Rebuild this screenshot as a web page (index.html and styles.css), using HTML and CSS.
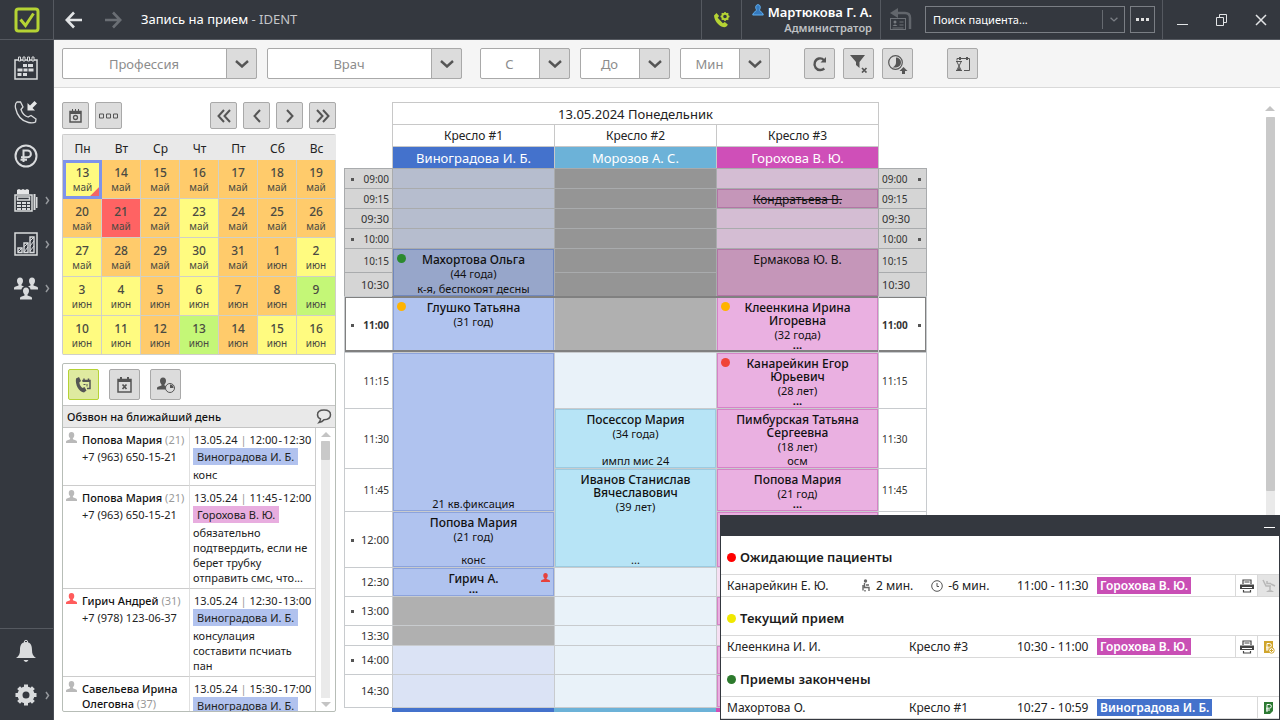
FILE: index.html
```html
<!DOCTYPE html>
<html lang="ru">
<head>
<meta charset="utf-8">
<meta name="viewport" content="width=device-width, initial-scale=1">
<title>Запись на прием - IDENT</title>
<link rel="stylesheet" href="styles.css">
</head>
<body>
<svg class="defs" aria-hidden="true">
  <symbol id="person" viewBox="0 0 12 12"><path d="M6 0c2 0 3 1.300 3 3.200C9 5 8.200 6.300 7.500 6.900v1L11 9.200c.6.300 1 .8 1 1.500V12H0v-1.300c0-.7.400-1.200 1-1.500l3.500-1.300v-1C3.800 6.300 3 5 3 3.200 3 1.300 4 0 6 0z" fill="currentColor"/></symbol>
  <symbol id="chev" viewBox="0 0 14 8"><path d="M1 1l6 5.500L13 1" fill="none" stroke="currentColor" stroke-width="2.400"/></symbol>
  <symbol id="more" viewBox="0 0 5 9"><path d="M1 1l2.500 3.500L1 8" fill="none" stroke="currentColor" stroke-width="1.500"/></symbol>
  <symbol id="printer" viewBox="0 0 14 14"><path d="M3 5V1h8v4M4.500 3h5M3.500 11v2h7v-2" fill="none" stroke="#444" stroke-width="1.200"/><path d="M0 5.500h14V10H0z" fill="#444"/><path d="M2 8.500h10" stroke="#fff"/></symbol>
</svg>
<div class="app">
  <header class="topbar">
    <a class="logo" href="#" aria-label="IDENT"><svg width="26" height="26" viewBox="0 0 26 26"><rect x="2" y="2" width="22" height="22" rx="2.500" fill="none" stroke="#b5d334" stroke-width="3"/><path d="M6.500 12.500l5 6L19.500 6.500" fill="none" stroke="#b5d334" stroke-width="3"/></svg></a>
    <button class="nav-arrow" aria-label="Назад"><svg width="18" height="18" viewBox="0 0 18 18"><path d="M17 9H2M9 1.500L1.800 9 9 16.500" fill="none" stroke="#e2e4e6" stroke-width="2.600"/></svg></button>
    <button class="nav-arrow" aria-label="Вперед"><svg width="18" height="18" viewBox="0 0 18 18"><path d="M1 9h15M9 1.500L16.200 9 9 16.500" fill="none" stroke="#6a6e74" stroke-width="2.600"/></svg></button>
    <h1 class="title">Запись на прием <span>- IDENT</span></h1>
    <button class="phone-set" aria-label="Телефония"><svg width="18" height="18" viewBox="0 0 18 18"><path d="M1 4.500L3.500 2l2.600 3-1.400 1.800 5.200 5.400 1.900-1.300 3 2.600c-1 2.500-3 3.300-5.800 2.200C5 14 1.500 10 1 4.500z" fill="#b5d334"/><circle cx="12" cy="5.500" r="2.800" fill="none" stroke="#b5d334" stroke-width="2"/><path d="M12 1v1.500M12 8.500V10M7.500 5.500H9M15 5.500h1.500M8.800 2.300l1 1M14.200 7.700l1 1M8.800 8.700l1-1M14.200 3.300l1-1" stroke="#b5d334" stroke-width="1.500"/></svg></button>
    <div class="user"><div class="user-name"><svg width="12" height="12" viewBox="0 0 12 12"><path d="M6 .7C9 .7 8.600 5 7.200 6L10.500 9l.8 2H.7l.8-2L4.800 6C3.400 5 3 .7 6 .7z" fill="#3579bd" stroke="#5fb0f2"/></svg>Мартюкова Г. А.</div><div class="user-role">Администратор</div></div>
    <button class="card-back" aria-label="Вернуться к карте"><svg width="22" height="23" viewBox="0 0 22 23"><path d="M7 5h8q5 0 5 5v11" fill="none" stroke="#62666c" stroke-width="2.500"/><path d="M0 5l8-5v10z" fill="#62666c"/><rect x=".5" y="10.500" width="15" height="11" fill="#34383f" stroke="#6d7177"/><path d="M9.500 14h4M9.500 17h4M2.500 20h11" stroke="#6d7177"/><circle cx="5" cy="14" r="1.500" fill="#777b80"/><path d="M2.500 18q2.500-3 5 0z" fill="#777b80"/></svg></button>
    <div class="search"><input type="text" aria-label="Поиск пациента" placeholder="Поиск пациента..."><button aria-label="Показать список"><svg width="8" height="5"><use href="#chev"/></svg></button></div>
    <button class="dots" aria-label="Ещё"><svg width="13" height="3" viewBox="0 0 13 3"><path d="M0 0h3v3H0zM5 0h3v3H5zM10 0h3v3h-3z" fill="#e0e0e0"/></svg></button>
    <div class="win">
      <button aria-label="Свернуть"><svg width="12" height="12" viewBox="0 0 12 12"><path d="M0 10.500h11" stroke="#e2e4e6"/></svg></button>
      <button aria-label="Восстановить"><svg width="12" height="12" viewBox="0 0 12 12"><path d="M.5 3.500h7v8h-7zM3.500 3V.5h7v8H8" fill="none" stroke="#e2e4e6"/></svg></button>
      <button aria-label="Закрыть"><svg width="12" height="12" viewBox="0 0 12 12"><path d="M1 1l10 10M11 1L1 11" stroke="#e2e4e6" stroke-width="1.500"/></svg></button>
    </div>
  </header>

  <nav class="sidebar">
    <div class="side-group">
      <a href="#" aria-label="Расписание"><svg width="24" height="24" viewBox="0 0 24 24"><path d="M1 4h22v19H1z" fill="none" stroke="#d9dbdd" stroke-width="1.500"/><path d="M4.500 1h2v4h-2zM9 1h2v4H9zM13.500 1h2v4h-2zM18 1h2v4h-2z" fill="#34383f" stroke="#d9dbdd"/><path d="M9 8h4v3H9zM14 8h5v3h-5zM3.500 12.500h5v3h-5zM9.500 12.500h4v3h-4zM14.500 12.500h5v3h-5zM3.500 17h4v3h-4zM9 17h4v3H9z" fill="#d9dbdd"/></svg></a>
      <a href="#" aria-label="Звонки"><svg width="24" height="24" viewBox="0 0 24 24"><path d="M3 2C1.500 3 1 5 1.500 8c1.500 7 6 13 13 14.500 3 .7 5.500.5 7-.5l.5-3-5-3.500-3 1.500C10.500 16 8 12.500 7 9.500l2-2.500L6.500 2z" fill="none" stroke="#d9dbdd" stroke-width="1.300"/><path d="M13.500 3v7.500h7.500l-2.500-2.500L23 3.500 20.500 1 16 5.500z" fill="#e5e6e7"/></svg></a>
      <a href="#" aria-label="Касса"><svg width="24" height="24" viewBox="0 0 24 24"><circle cx="12" cy="12" r="10.500" fill="none" stroke="#d9dbdd" stroke-width="2"/><path d="M9.500 18V6.500h4a3.300 3.300 0 010 6.800H7M6.500 15.800H13" fill="none" stroke="#d9dbdd" stroke-width="2"/></svg></a>
      <a href="#" aria-label="Оплата"><svg width="24" height="24" viewBox="0 0 24 24"><path d="M3 6V2l2-1 2 1 2-1 2 1 2-1 2 1v4z" fill="#e5e6e7"/><path d="M1 7h17v16H1zM3.500 9h12v3h-12z" fill="none" stroke="#d9dbdd" stroke-width="1.500"/><path d="M3 14h4v2H3zM8 14h4v2H8zM13 14h3v2h-3zM3 17h4v2H3zM8 17h4v2H8zM13 17h3v2h-3zM3 20h4v2H3zM8 20h4v2H8zM13 20h3v2h-3z" fill="#d9dbdd"/><path d="M19.500 6h2v16h-2zM22 9h1.500v11H22z" fill="#d9dbdd"/></svg><svg class="more" width="5" height="9"><use href="#more"/></svg></a>
      <a href="#" aria-label="Отчеты"><svg width="24" height="24" viewBox="0 0 24 24"><path d="M1 1h22v22H1z" fill="none" stroke="#d9dbdd" stroke-width="1.500"/><path d="M4 16h4v4.500H4zM10 11h4v9.500h-4zM16 5h4v15.500h-4z" fill="none" stroke="#d9dbdd" stroke-width="1.400"/><path d="M4 20l4-4M10 15l4-4M10 20l4-5M16 9l4-4M16 14l4-5M16 19l4-5" fill="none" stroke="#d9dbdd"/></svg><svg class="more" width="5" height="9"><use href="#more"/></svg></a>
      <a href="#" aria-label="Пациенты"><svg width="24" height="24" viewBox="0 0 24 24" color="#d9dbdd"><use href="#person" width="12" height="13" y="1"/><use href="#person" x="12" width="12" height="13" y="1"/><circle cx="12" cy="14.500" r="4.700" fill="#34383f"/><use href="#person" x="6" y="11" width="12" height="13"/></svg><svg class="more" width="5" height="9"><use href="#more"/></svg></a>
    </div>
    <div class="side-group bottom">
      <a href="#" aria-label="Уведомления"><svg width="24" height="24" viewBox="0 0 24 24"><path d="M12 3c-5 0-6 4-6 8 0 4-1 6-4 8h20c-3-2-4-4-4-8 0-4-1-8-6-8z" fill="#d9dbdd"/><circle cx="12" cy="3" r="1.700" fill="none" stroke="#d9dbdd"/><path d="M9.500 21h5q-2.500 4-5 0z" fill="#d9dbdd"/></svg></a>
      <a href="#" aria-label="Настройки"><svg width="24" height="24" viewBox="0 0 24 24"><circle cx="12" cy="12" r="6" fill="none" stroke="#d9dbdd" stroke-width="5"/><path d="M12 1.500v4M12 18.500v4M1.500 12h4M18.500 12h4M4.600 4.600l3 3M16.400 16.400l3 3M4.600 19.400l3-3M16.400 7.600l3-3" stroke="#d9dbdd" stroke-width="4"/></svg><svg class="more" width="5" height="9"><use href="#more"/></svg></a>
    </div>
  </nav>

  <div class="toolbar">
    <div class="combo wide"><select aria-label="Профессия"><option>Профессия</option></select><span><svg width="14" height="8"><use href="#chev"/></svg></span></div>
    <div class="combo wide"><select aria-label="Врач"><option>Врач</option></select><span><svg width="14" height="8"><use href="#chev"/></svg></span></div>
    <div class="times">
      <div class="combo"><select aria-label="С"><option>С</option></select><span><svg width="14" height="8"><use href="#chev"/></svg></span></div>
      <div class="combo"><select aria-label="До"><option>До</option></select><span><svg width="14" height="8"><use href="#chev"/></svg></span></div>
      <div class="combo"><select aria-label="Минут"><option>Мин</option></select><span><svg width="14" height="8"><use href="#chev"/></svg></span></div>
    </div>
    <div class="tools">
      <button class="btn tall" aria-label="Обновить"><svg width="16" height="16" viewBox="0 0 16 16"><path d="M12 4.200A5.500 5.800 0 108.500 14q2 0 3.800-1.500" fill="none" stroke="#555" stroke-width="2.400"/><path d="M14 1v5.500H8.500z" fill="#555"/></svg></button>
      <button class="btn tall" aria-label="Сбросить фильтр"><svg width="19" height="19" viewBox="0 0 19 19"><path d="M1 1h15l-5.500 7v6L7 11V8z" fill="#555"/><path d="M13 14l4.500 4.500M17.500 14L13 18.500" stroke="#555" stroke-width="1.700"/></svg></button>
      <button class="btn tall" aria-label="Добавить время"><svg width="21" height="20" viewBox="0 0 21 20"><circle cx="8.500" cy="8.500" r="6.800" fill="none" stroke="#555" stroke-width="1.200"/><path d="M9 3.500a5 5 0 010 10H5.500Q9 11.500 9 8.500z" fill="#555"/><path d="M16.500 13l4 4H18v3h-3v-3h-2.500z" fill="#555"/></svg></button>
      <button class="btn tall apart" aria-label="Лист ожидания"><svg width="16" height="16" viewBox="0 0 16 16"><path d="M2 4.500V2.500h12.500V14.500H9" fill="none" stroke="#555"/><path d="M4 1h2v3H4zM11 1h2v3h-2z" fill="#555"/><path d="M1 5.500h6M1 14.500h6M2 6l4 8M6 6L2 14" fill="none" stroke="#555"/><path d="M2.500 14L4 11l1.500 3z" fill="#555"/></svg></button>
    </div>
  </div>

  <main class="content">
    <aside class="left">
      <div class="cal-nav">
        <button class="btn" aria-label="Сегодня"><svg width="13" height="14" viewBox="0 0 13 14"><path d="M1 2.500h11V13H1z" fill="none" stroke="#555" stroke-width="1.500"/><path d="M1 3h11v2H1zM3 0h1v3H3zM6 0h1v3H6zM9 0h1v3H9z" fill="#555"/><circle cx="6.500" cy="8.500" r="2" fill="none" stroke="#555" stroke-width="1.300"/></svg></button>
        <button class="btn" aria-label="Другие даты"><svg width="19" height="6" viewBox="0 0 19 6"><path d="M.500 1h4v4h-4zM7.500 1h4v4h-4zM14.500 1h4v4h-4z" fill="none" stroke="#555"/></svg></button>
        <button class="btn push" aria-label="Назад на месяц"><svg width="14" height="14" viewBox="0 0 14 14"><path d="M7 1L1.500 7 7 13M13 1L7.500 7l5.500 6" fill="none" stroke="#555" stroke-width="2"/></svg></button>
        <button class="btn" aria-label="Назад на неделю"><svg width="8" height="14" viewBox="0 0 8 14"><path d="M7 1L1.500 7 7 13" fill="none" stroke="#555" stroke-width="2"/></svg></button>
        <button class="btn" aria-label="Вперед на неделю"><svg width="8" height="14" viewBox="0 0 8 14"><path d="M1 1l5.500 6L1 13" fill="none" stroke="#555" stroke-width="2"/></svg></button>
        <button class="btn" aria-label="Вперед на месяц"><svg width="14" height="14" viewBox="0 0 14 14"><path d="M1 1l5.500 6L1 13M7 1l5.500 6L7 13" fill="none" stroke="#555" stroke-width="2"/></svg></button>
      </div>
      <table class="month">
        <thead><tr><th>Пн</th><th>Вт</th><th>Ср</th><th>Чт</th><th>Пт</th><th>Сб</th><th>Вс</th></tr></thead>
        <tbody>
          <tr><td class="y today">13<small>май</small></td><td>14<small>май</small></td><td>15<small>май</small></td><td>16<small>май</small></td><td>17<small>май</small></td><td>18<small>май</small></td><td>19<small>май</small></td></tr>
          <tr><td>20<small>май</small></td><td class="r">21<small>май</small></td><td>22<small>май</small></td><td class="y">23<small>май</small></td><td>24<small>май</small></td><td>25<small>май</small></td><td>26<small>май</small></td></tr>
          <tr><td class="y">27<small>май</small></td><td>28<small>май</small></td><td>29<small>май</small></td><td class="y">30<small>май</small></td><td>31<small>май</small></td><td>1<small>июн</small></td><td class="y">2<small>июн</small></td></tr>
          <tr><td class="y">3<small>июн</small></td><td class="y">4<small>июн</small></td><td>5<small>июн</small></td><td class="y">6<small>июн</small></td><td>7<small>июн</small></td><td>8<small>июн</small></td><td class="g">9<small>июн</small></td></tr>
          <tr><td class="y">10<small>июн</small></td><td class="y">11<small>июн</small></td><td>12<small>июн</small></td><td class="g">13<small>июн</small></td><td>14<small>июн</small></td><td class="y">15<small>июн</small></td><td class="y">16<small>июн</small></td></tr>
        </tbody>
      </table>
      <section class="calls">
        <div class="tabs">
          <button class="btn tab on" aria-label="Обзвон"><svg width="17" height="17" viewBox="0 0 17 17"><path d="M1 2.500L4 1l2 4-1.700 1.500C4.500 9 6 11 7.500 12L9.500 11l2 3.500-2.500 2C4 16 0 9 1 2.500z" fill="#555"/><path d="M7.500 4.500h7.500v8h-3M9 5V2.500M13.500 5V2.500" fill="none" stroke="#555" stroke-width="1.500"/><path d="M7.500 5h7.500" stroke="#555" stroke-width="2"/><path d="M8.500 8.500h2M12 8v2.500" stroke="#555"/></svg></button>
          <button class="btn tab" aria-label="Отмены"><svg width="15" height="16" viewBox="0 0 15 16"><path d="M1 2.500h13V15H1z" fill="none" stroke="#555" stroke-width="1.500"/><path d="M1 2h13v3H1zM3 0h2v3H3zM10 0h2v3h-2z" fill="#555"/><path d="M5.500 7.500l4 4.500M9.500 7.500l-4 4.500" stroke="#555" stroke-width="1.700"/></svg></button>
          <button class="btn tab" aria-label="Ожидание"><svg width="18" height="17" viewBox="0 0 18 17" color="#555"><use href="#person" y="1" width="12" height="13"/><circle cx="13" cy="12" r="4.500" fill="#dcdcdc" stroke="#555"/><path d="M13 12V8.500A3.500 3.500 0 0116.500 12z" fill="#555"/></svg></button>
        </div>
        <div class="calls-head"><h2>Обзвон на ближайший день</h2><svg width="16" height="15" viewBox="0 0 15 15"><path d="M7.500 1C3.500 1 1 3 1 5.800c0 2 1 3.400 3 4.200-.2 1.500-.700 2.500-1.500 3.500C5 13 6.500 12 7.500 10.700c4 0 6.500-2 6.500-4.900S11.500 1 7.500 1z" fill="none" stroke="#555" stroke-width="1.500"/></svg></div>
        <div class="calls-body">
          <table class="call-list">
            <colgroup><col class="who-col"><col></colgroup>
            <tr><td><div class="who"><svg width="11" height="11"><use href="#person"/></svg><div><b>Попова Мария</b> <i>(21)</i><p>+7 (963) 650-15-21</p></div></div></td><td><span class="when">13.05.24 <i>|</i> 12:00</span>-<span class="when">12:30</span><p><span class="doc blue">Виноградова И. Б.</span></p><div>конс</div></td></tr>
            <tr><td><div class="who"><svg width="11" height="11"><use href="#person"/></svg><div><b>Попова Мария</b> <i>(21)</i><p>+7 (963) 650-15-21</p></div></div></td><td><span class="when">13.05.24 <i>|</i> 11:45</span>-<span class="when">12:00</span><p><span class="doc pink">Горохова В. Ю.</span></p><div>обязательно<br>подтвердить, если не<br>берет трубку<br>отправить смс, что...</div></td></tr>
            <tr><td><div class="who red"><svg width="11" height="11"><use href="#person"/></svg><div><b>Гирич Андрей</b> <i>(31)</i><p>+7 (978) 123-06-37</p></div></div></td><td><span class="when">13.05.24 <i>|</i> 12:30</span>-<span class="when">13:00</span><p><span class="doc blue">Виноградова И. Б.</span></p><div>консулация<br>составити псчиать<br>пан</div></td></tr>
            <tr><td><div class="who"><svg width="11" height="11"><use href="#person"/></svg><div><b>Савельева Ирина<br>Олеговна</b> <i>(37)</i></div></div></td><td><span class="when">13.05.24 <i>|</i> 15:30</span>-<span class="when">17:00</span><p><span class="doc blue">Виноградова И. Б.</span></p></td></tr>
          </table>
          <div class="scroll"><span class="up"></span><span class="track"><span class="thumb"></span></span><span class="down"></span></div>
        </div>
      </section>
    </aside>

    <section class="schedule">
      <table class="grid">
        <colgroup><col class="tcol"><col><col><col><col class="tcol last"></colgroup>
        <thead>
          <tr><td></td><th class="date" colspan="3">13.05.2024 Понедельник</th><td></td></tr>
          <tr><td></td><th>Кресло #1</th><th>Кресло #2</th><th>Кресло #3</th><td></td></tr>
          <tr><td></td><th class="d1">Виноградова И. Б.</th><th class="d2">Морозов А. С.</th><th class="d3">Горохова В. Ю.</th><td></td></tr>
        </thead>
        <tbody>
          <tr class="past h20"><th class="hour">09:00</th><td class="c1"></td><td class="off"></td><td class="c3"></td><th class="hour r">09:00</th></tr>
          <tr class="past h20"><th>09:15</th><td class="c1"></td><td class="off"></td><td class="appt pink"><div class="in"><s>Кондратьева В.</s></div></td><th class="r">09:15</th></tr>
          <tr class="past h20"><th class="big">09:30</th><td class="c1"></td><td class="off"></td><td class="c3"></td><th class="big r">09:30</th></tr>
          <tr class="past h20"><th class="hour">10:00</th><td class="c1"></td><td class="off"></td><td class="c3"></td><th class="hour r">10:00</th></tr>
          <tr class="past h24"><th>10:15</th><td class="appt blue" rowspan="2"><div class="in"><i class="dot green"></i><b>Махортова Ольга</b><small>(44 года)</small><em>к-я, беспокоят десны</em></div></td><td class="off"></td><td class="appt pink" rowspan="2"><div class="in">Ермакова Ю. В.</div></td><th class="r">10:15</th></tr>
          <tr class="past h24"><th class="big">10:30</th><td class="off"></td><th class="big r">10:30</th></tr>
          <tr class="now h56"><th class="hour">11:00</th><td class="appt blue"><div class="in"><i class="dot amber"></i><b>Глушко Татьяна</b><small>(31 год)</small></div></td><td class="off"></td><td class="appt pink"><div class="in"><i class="dot amber"></i><b>Клеенкина Ирина Игоревна</b><small>(32 года)</small><em class="cut">...</em></div></td><th class="hour r">11:00</th></tr>
          <tr class="h56"><th>11:15</th><td class="appt blue" rowspan="3"><div class="in"><em>21 кв.фиксация</em></div></td><td class="c2"></td><td class="appt pink"><div class="in"><i class="dot red"></i><b>Канарейкин Егор Юрьевич</b><small>(28 лет)</small><em class="cut">...</em></div></td><th class="r">11:15</th></tr>
          <tr class="h60"><th>11:30</th><td class="appt cyan"><div class="in"><b>Посессор Мария</b><small>(34 года)</small><em>импл мис 24</em></div></td><td class="appt pink"><div class="in"><b>Пимбурская Татьяна Сергеевна</b><small>(18 лет)</small><em>осм</em></div></td><th class="r">11:30</th></tr>
          <tr class="h43"><th>11:45</th><td class="appt cyan" rowspan="2"><div class="in"><b>Иванов Станислав Вячеславович</b><small>(39 лет)</small><em>...</em></div></td><td class="appt pink"><div class="in"><b>Попова Мария</b><small>(21 год)</small><em class="cut">...</em></div></td><th class="r">11:45</th></tr>
          <tr class="h56"><th class="hour big">12:00</th><td class="appt blue"><div class="in"><b>Попова Мария</b><small>(21 год)</small><em>конс</em></div></td><td class="appt pink"></td><th class="hour big r">12:00</th></tr>
          <tr class="h29"><th class="big">12:30</th><td class="appt blue"><div class="in"><svg class="flag" width="9" height="9"><use href="#person"/></svg><b>Гирич А.</b><em class="cut">...</em></div></td><td class="c2"></td><td class="c3"></td><th class="big r">12:30</th></tr>
          <tr class="h29"><th class="hour big">13:00</th><td class="off"></td><td class="c2"></td><td class="appt pink"></td><th class="hour big r">13:00</th></tr>
          <tr class="h20"><th class="big">13:30</th><td class="off"></td><td class="c2"></td><td class="c3"></td><th class="big r">13:30</th></tr>
          <tr class="h29"><th class="hour big">14:00</th><td class="c1"></td><td class="c2"></td><td class="appt pink"></td><th class="hour big r">14:00</th></tr>
          <tr class="h33"><th class="big">14:30</th><td class="c1"></td><td class="c2"></td><td class="appt pink"></td><th class="big r">14:30</th></tr>
        </tbody>
        <tfoot><tr><td></td><td class="d1"></td><td class="d2"></td><td class="d3"></td><td></td></tr></tfoot>
      </table>
      <div class="scroll page"><span class="up"></span><span class="track"><span class="thumb"></span></span></div>
    </section>
  </main>
</div>

<section class="popup" aria-label="Пациенты в клинике">
  <div class="popup-bar"><button aria-label="Свернуть"><svg width="11" height="2" viewBox="0 0 11 2"><path d="M0 .5h11" stroke="#fff"/></svg></button></div>
  <h3><i class="dot p-red"></i>Ожидающие пациенты</h3>
  <table><tr><td class="name">Канарейкин Е. Ю.</td><td class="mid"><div class="waits"><span><svg width="9" height="13" viewBox="0 0 9 13"><circle cx="3.500" cy="2" r="1.700" fill="#666"/><path d="M2.500 4v4.500h4.500V12M1 6v5.500M3 11v1.500M4 6h3" fill="none" stroke="#666" stroke-width="1.400"/></svg>2 мин.</span><span><svg width="12" height="12" viewBox="0 0 12 12"><circle cx="6" cy="6" r="5.300" fill="none" stroke="#555"/><path d="M6 3v3.500h2" fill="none" stroke="#555"/></svg>-6 мин.</span></div></td><td class="time">11:00 - 11:30</td><td><span class="tag">Горохова В. Ю.</span></td><td class="act"><button aria-label="Печать"><svg width="14" height="14"><use href="#printer"/></svg></button></td><td class="act dim"><button aria-label="В кресло" disabled><svg width="14" height="14" viewBox="0 0 14 14"><path d="M1 1l3 6h5M5 2v2.500h4M8 7v4M9 5l4 2" fill="none" stroke="#b8b8b8" stroke-width="1.500"/><path d="M4 13q4-4 8 0z" fill="#b8b8b8"/></svg></button></td></tr></table>
  <h3><i class="dot p-yellow"></i>Текущий прием</h3>
  <table><tr><td class="name">Клеенкина И. И.</td><td class="mid chair">Кресло #3</td><td class="time">10:30 - 11:00</td><td><span class="tag">Горохова В. Ю.</span></td><td class="act"><button aria-label="Печать"><svg width="14" height="14"><use href="#printer"/></svg></button></td><td class="act"><button aria-label="Добавить оплату"><svg width="12" height="14" viewBox="0 0 12 14"><path d="M1 1h9v12H1z" fill="#d0a52c"/><path d="M4 11V3.500h2.500a1.700 1.700 0 010 3.700H3M3 9h4" fill="none" stroke="#fff"/><circle cx="8.500" cy="10.500" r="2.700" fill="#fff" stroke="#d0a52c"/><path d="M7 10.500h3M8.500 9v3" stroke="#d0a52c"/></svg></button></td></tr></table>
  <h3><i class="dot p-green"></i>Приемы закончены</h3>
  <table><tr><td class="name">Махортова О.</td><td class="mid chair">Кресло #1</td><td class="time">10:27 - 10:59</td><td><span class="tag blue">Виноградова И. Б.</span></td><td class="act none"></td><td class="act"><button aria-label="Оплата"><svg width="12" height="14" viewBox="0 0 12 14"><path d="M1 1h9v9l-3 3H1z" fill="#2d7a33"/><path d="M4 11V3.500h2.500a1.700 1.700 0 010 3.700H3M3 9h4" fill="none" stroke="#fff"/></svg></button></td></tr></table>
</section>
</body>
</html>
```
FILE: styles.css
```css
* { box-sizing: border-box; }
body { margin: 0; font: 12px/16px "Noto Sans", "Open Sans", sans-serif; color: #222; background: #fff; }
button, input, select { font: inherit; color: inherit; margin: 0; padding: 0; border: 0; background: none; border-radius: 0; }
button { display: flex; align-items: center; justify-content: center; }
table { border-collapse: separate; border-spacing: 0; table-layout: fixed; }
td, th { padding: 0; font-weight: 400; }
h1, h2, h3, p { margin: 0; font-weight: 400; }
i, em { font-style: normal; }
svg { display: block; flex: none; }
.defs { position: absolute; width: 0; height: 0; }

.app { height: 100vh; display: grid; grid-template: 40px 48px minmax(0, 1fr) / 54px minmax(0, 1fr); overflow: hidden; }

/* Top bar */
.topbar { grid-column: 1 / -1; display: flex; align-items: stretch; background: #34383f; border-bottom: 1px solid #555960; color: #fff; }
.logo { width: 54px; display: flex; align-items: center; justify-content: center; border-right: 1px solid #555960; }
.nav-arrow { width: 39px; }
.title { flex: 1; font-size: 13px; line-height: 38px; padding-left: 9px; }
.title span { color: #c4c6c9; }
.phone-set { width: 41px; border: solid #555960; border-width: 0 1px; }
.user { width: 139px; padding: 4px 8px 0 0; text-align: right; border-right: 1px solid #555960; font-weight: 600; }
.user-name { display: flex; justify-content: flex-end; gap: 4px; font-size: 13px; font-weight: 600; }
.user-role { color: #bfc1c4; font-size: 11px; }
.card-back { width: 40px; }
.search { width: 200px; margin: 6px 5px 6px 4px; display: flex; border: 1px solid #7a7e84; }
.search input { flex: 1; min-width: 0; padding-left: 7px; font-size: 11px; }
.search input::placeholder { color: #fff; opacity: 1; }
.search button { width: 22px; margin: 3px 0; border-left: 1px solid #666a70; color: #7a7e84; }
.dots { width: 25px; margin: 6px 0; border: 1px solid #7a7e84; }
.win { margin-left: 7px; width: 118px; display: flex; border-left: 1px solid #555960; }
.win button { flex: 1; }

/* Side bar */
.sidebar { grid-row: 2 / 4; display: flex; flex-direction: column; justify-content: space-between; background: #34383f; border-right: 1px solid #4a4e55; }
.side-group { padding-top: 6px; }
.side-group.bottom { padding: 0 0 3px; border-top: 1px solid #555960; }
.side-group a { height: 44px; display: grid; grid-template-columns: 14px 24px 1fr; align-items: center; }
.side-group a > svg:first-child { grid-column: 2; }
.side-group .more { justify-self: end; margin-right: 3px; color: #94979b; }

/* Filter bar */
.toolbar { display: flex; align-items: center; gap: 10px; padding: 0 8px; background: #f5f5f5; border-bottom: 1px solid #d9d9d9; }
.combo { width: 90px; height: 31px; position: relative; color: #8c8c8c; font-size: 13px; }
.combo.wide { width: 195px; }
.combo select { width: 100%; height: 100%; appearance: none; text-align: center; text-align-last: center; padding-right: 31px; background: #fff; border: 1px solid #a9a9a9; border-radius: 2px; }
.combo span { position: absolute; inset: 0 0 0 auto; width: 31px; display: flex; align-items: center; justify-content: center; background: #dcdcdc; border: 1px solid #a9a9a9; border-radius: 0 2px 2px 0; color: #555; pointer-events: none; }
.times { display: flex; gap: 10px; padding-left: 8px; }
.tools { display: flex; gap: 8px; padding-left: 24px; }
.btn { width: 27px; height: 27px; background: #dcdcdc; border: 1px solid #a9a9a9; border-radius: 2px; }
.btn.tall { width: 31px; height: 31px; }
.apart { margin-left: 26px; }

.content { display: flex; min-height: 0; }

/* Month calendar */
.left { width: 282px; padding: 14px 0 8px 8px; display: flex; flex-direction: column; flex: none; }
.cal-nav { display: flex; gap: 6px; margin-bottom: 5px; }
.cal-nav .push { margin-left: auto; }
.month { width: 274px; border: solid #ccc; border-width: 1px 0 0 1px; border-radius: 2px; text-align: center; color: #4a4a42; }
.month th { height: 25px; padding-top: 2px; background: #e9e9e9; color: #222; }
.month td { height: 39px; padding-top: 1px; font-size: 12px; font-weight: 500; line-height: 14px; background: #ffcb6b; border: solid #d0d0c8; border-width: 0 1px 1px 0; vertical-align: middle; }
.month small { display: block; font-size: 10px; font-weight: 400; line-height: 14px; }
.month .y { background: #fffb80; }
.month .r { background: #ff6363; }
.month .g { background: #c4f777; }
.month .today { border: 3px solid #7e93ea; padding: 0; background: linear-gradient(135deg, transparent 86%, #f36565 87%), #fffb80; }

/* Call list */
.calls { flex: 1; min-height: 0; margin-top: 8px; display: flex; flex-direction: column; border: 1px solid #b7bdb7; border-radius: 2px; overflow: hidden; }
.tabs { display: flex; gap: 10px; padding: 5px; border-bottom: 1px solid #c4c4c4; }
.btn.tab { width: 31px; height: 31px; }
.btn.on { background: #dfeaa0; border-color: #b5d334; }
.calls-head { display: flex; align-items: center; justify-content: space-between; height: 22px; flex: none; padding: 0 3px 0 4px; background: #e9e9e9; border-bottom: 1px solid #c4c4c4; color: #111; }
.calls-head h2 { font-size: 11px; font-weight: 500; }
.calls-body { flex: 1; min-height: 0; display: flex; overflow: hidden; font-size: 11px; }
.call-list { width: 253px; flex: none; height: max-content; border-right: 1px solid #ccc; }
.who-col { width: 127px; }
.call-list td { vertical-align: top; border-bottom: 1px solid #ccc; padding: 4px 0 3px 3px; line-height: 15px; white-space: nowrap; }
.call-list td:first-child { border-right: 1px solid #e0e0e0; }
.call-list b { font-weight: 500; color: #111; }
.call-list i { color: #999; }
.call-list p { margin: 1px 0 2px; line-height: 17px; }
.who { display: flex; gap: 5px; color: #b9b9b9; }
.who > div { color: #222; }
.who.red { color: #ff5c5c; }
.when { margin: 0 1px; }
.doc { display: inline-block; padding: 0 4px; }
.doc.blue { background: #b1c2ee; }
.doc.pink { background: #e8addf; }
.scroll { flex: 1; display: flex; flex-direction: column; align-items: center; gap: 4px; padding: 4px 0; }
.up, .down { border: solid transparent; border-width: 0 5px 5px; border-bottom-color: #c4c4c4; }
.down { border-width: 5px 5px 0; border-top-color: #c4c4c4; }
.track { flex: 1; width: 9px; background: #eaeaea; }
.thumb { display: block; height: 19px; background: #c9c9c9; border-radius: 1px; }

/* Schedule */
.schedule { flex: 1; min-width: 0; display: flex; justify-content: space-between; padding: 14px 5px 0 8px; }
.grid { width: 583px; height: max-content; text-align: center; }
.tcol { width: 48px; }
.tcol.last { width: 49px; }
.grid thead th { height: 22px; border: solid #c8c8c8; border-width: 1px 0 0 1px; color: #222; }
.grid thead td:last-child { border-left: 1px solid #c8c8c8; }
.grid .date { font-size: 13px; }
.grid thead .d1, .grid thead .d2, .grid thead .d3 { color: #fff; font-size: 13px; }
.d1 { background: #4472cc; }
.d2 { background: #6cb2d8; }
.d3 { background: #cf4fb8; }
.grid tbody th, .grid tbody td { border: solid #c8cbce; border-width: 1px 0 0 1px; }
.grid tbody th.r { border-right-width: 1px; }
.grid tbody th { position: relative; font-size: 10px; line-height: 14px; padding: 0 3px; text-align: right; color: #333; }
.grid tbody th.r { text-align: left; }
.grid tbody th.big { font-size: 11px; }
.hour::before { content: ""; position: absolute; left: 6px; top: calc(50% - 1px); width: 3px; height: 3px; background: #555; }
.hour.r::before { left: auto; right: 5px; }
.h20 { height: 20px; } .h24 { height: 24px; } .h29 { height: 29px; } .h33 { height: 33px; }
.h43 { height: 43px; } .h56 { height: 56px; } .h60 { height: 60px; }
.c1 { background: #dbe3f5; }
.c2 { background: #e9f2f9; }
.c3 { background: #f6e0f3; }
.off { background: #b0b0b0; }
.grid .past th, .grid .past td { border-color: #a9abad; }
.past th { background: #d5d5d5; }
.past .c1 { background: #b6bdce; }
.past .c3 { background: #d4bdd3; }
.past .off { background: #959595; }
.appt { height: 1px; vertical-align: top; line-height: 13px; color: #111; }
.appt.blue { background: #b0c3ef; box-shadow: inset 0 0 0 1px #8ca3dc; }
.appt.pink { background: #eab0e1; box-shadow: inset 0 0 0 1px #d583c6; }
.appt.cyan { background: #b7e4f6; box-shadow: inset 0 0 0 1px #9ccbe0; }
.past .appt.blue { background: #97a6ca; box-shadow: inset 0 0 0 1px #7188bd; }
.past .appt.pink { background: #c596b9; box-shadow: inset 0 0 0 1px #b276a5; }
.in { position: relative; height: 100%; display: flex; flex-direction: column; align-items: center; padding: 4px 18px 0; }
.appt b { font-weight: 500; }
.appt small { font-size: 11px; line-height: 15px; }
.appt em { margin-top: auto; font-size: 11px; line-height: 14px; white-space: nowrap; }
.appt em.cut { line-height: 4px; padding-bottom: 5px; font-weight: 700; }
.dot { position: absolute; left: 4px; top: 5px; width: 9px; height: 9px; border-radius: 50%; }
.green { background: #2b8a2f; }
.amber { background: #ffb300; }
.dot.red { background: #f04438; }
.flag { position: absolute; right: 4px; top: 5px; color: #e6413c; }
.now { outline: 2px solid #808080; outline-offset: -2px; }
.now th { font-weight: 700; }
.grid tfoot td { height: 5px; border-top: 1px solid #c8cbce; }
.scroll.page { flex: none; padding: 4px 0 0; gap: 6px; }
.scroll.page .thumb { height: 374px; }

/* Floating patients window */
.popup { position: fixed; right: 0; bottom: 0; width: 560px; background: #fff; border: solid #34383f; border-width: 0 1px 1px; z-index: 2; }
.popup-bar { height: 21px; background: #34383f; display: flex; justify-content: flex-end; padding-right: 4px; }
.popup-bar button { padding-top: 4px; }
.popup h3 { display: flex; align-items: center; gap: 4px; height: 38px; padding: 4px 0 0 6px; font-size: 13px; font-weight: 600; color: #1c1c1c; }
.popup .dot { position: static; }
.p-red { background: #f00; } .p-yellow { background: #f0e800; } .p-green { background: #2d7a2d; }
.popup table { width: 100%; }
.popup td { height: 23px; border: solid #d9d9d9; border-width: 1px 0; }
.popup .name { width: 141px; padding-left: 6px; }
.popup .mid { width: 155px; }
.popup .chair { padding-left: 47px; }
.popup .time { width: 80px; }
.waits { display: flex; gap: 18px; }
.waits span { display: flex; align-items: center; gap: 5px; }
.tag { display: inline-block; padding: 0 3px; line-height: 17px; background: #c94fb5; color: #fff; font-weight: 600; }
.tag.blue { background: #4472cc; }
.popup .act { width: 22px; border-left-width: 1px; }
.popup .none { border-left-width: 0; }
.act button { width: 100%; height: 100%; }
.dim { background: #e4e4e4; }
```
